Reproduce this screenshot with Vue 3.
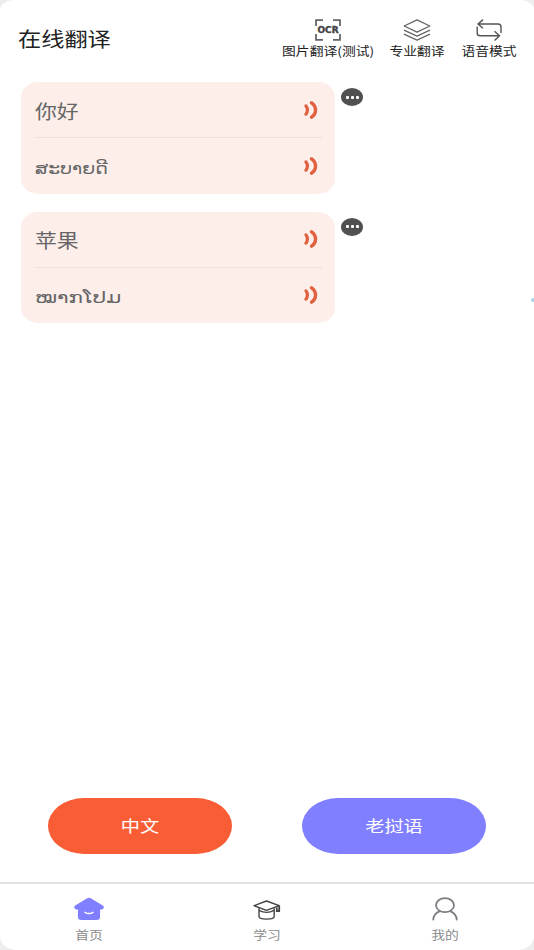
<template>
  <div class="app">
    <header class="header">
      <h1 class="title"><span class="wide">在线翻译</span></h1>
      <nav class="tools">
        <button class="tool ocr">
          <svg width="26" height="22" viewBox="0 0 26 22" fill="none" stroke="#666" stroke-width="1.8">
            <path d="M1 7V1.2h7M18 1.2h7V7M25 15v5.8h-7M8 20.8H1V15" />
            <text x="2.5" y="13.6" class="ocr-text" textLength="21" lengthAdjust="spacingAndGlyphs">OCR</text>
          </svg>
          <span class="wide">图片翻译(测试)</span>
        </button>
        <button class="tool pro">
          <svg width="28" height="22" viewBox="0 0 28 22" fill="none" stroke="#666" stroke-width="1.3" stroke-linejoin="round">
            <path d="M14 .8 26.8 7 14 13.2 1.2 7z" />
            <path d="M1 11.2l13 6 13-6M1 15.2l13 6 13-6" />
          </svg>
          <span class="wide">专业翻译</span>
        </button>
        <button class="tool voice">
          <svg width="26" height="22" viewBox="0 0 26 22" fill="none" stroke="#555" stroke-width="1.4">
            <path d="M7 .6 2 5l5 4.2M2 5H22q3 0 3 3V14" />
            <path d="M18.5 12.2l5 4.6-5 4.6M23.5 16.8H4q-2.8 0-2.8-2.5V7.5" />
          </svg>
          <span class="wide">语音模式</span>
        </button>
      </nav>
    </header>

    <main class="messages">
      <div v-for="item in messages" :key="item.source" class="message">
        <div class="card">
          <div class="line source">
            <span class="wide">{{ item.source }}</span>
            <svg class="sound" width="14" height="18" viewBox="0 0 14 18" fill="none" stroke="#e0603f" stroke-linecap="round">
              <path d="M2 4.9Q4.8 9 2 13.2" stroke-width="3.2" />
              <path d="M7.6 1.8C12.8 5.4 12.8 12.6 7.6 16.2" stroke-width="3.4" />
            </svg>
          </div>
          <div class="line target">
            <span class="wide lao" :class="item.size">{{ item.target }}</span>
            <svg class="sound" width="14" height="18" viewBox="0 0 14 18" fill="none" stroke="#e0603f" stroke-linecap="round">
              <path d="M2 4.9Q4.8 9 2 13.2" stroke-width="3.2" />
              <path d="M7.6 1.8C12.8 5.4 12.8 12.6 7.6 16.2" stroke-width="3.4" />
            </svg>
          </div>
        </div>
        <button class="more"><i></i><i></i><i></i></button>
      </div>
    </main>

    <span class="edge-dot"></span>

    <div class="languages">
      <button class="lang chinese"><span class="wide">中文</span></button>
      <button class="lang laotian"><span class="wide">老挝语</span></button>
    </div>

    <footer class="tabbar">
      <div class="tab">
        <svg width="30" height="24" viewBox="0 0 30 24">
          <path d="M13.2 1.2q1.8-1 3.6 0L28.8 8.6q1.6 1.4.6 2.9-.6.9-2.2.9h-1.1v7.4q0 3.2-3.6 3.2h-15q-3.6 0-3.6-3.2v-7.4H2.8q-1.6 0-2.2-.9-1-1.5.6-2.9z" fill="#807fff" />
          <path d="M11 15.3q4 2.6 8 0" fill="none" stroke="#fff" stroke-width="1.5" stroke-linecap="round" />
        </svg>
        <span class="wide">首页</span>
      </div>
      <div class="tab">
        <svg width="28" height="24" viewBox="0 0 28 24" fill="none" stroke="#444" stroke-width="1.4" stroke-linejoin="round">
          <path d="M13.5 4 26.2 8.7 13.5 13.4 1 8.7z" />
          <path d="M6 11.2v8.3q0 2.6 7.6 2.6t7.6-2.6v-8.3" />
          <path d="M6 13.4q7.6 4 15.2 0" />
          <path d="M26.2 8.7v5.5h-2.4v-3.7" stroke-width="1.8" />
        </svg>
        <span class="wide">学习</span>
      </div>
      <div class="tab">
        <svg width="26" height="24" viewBox="0 0 26 24" fill="none" stroke="#7d7d83" stroke-width="1.8" stroke-linecap="round">
          <ellipse cx="13" cy="8.2" rx="9" ry="7" />
          <path d="M1.3 22.5Q1.6 17 7.4 14.4M18.6 14.4Q24.4 17 24.7 22.5" />
        </svg>
        <span class="wide">我的</span>
      </div>
    </footer>
  </div>
</template>

<script setup>
const messages = [
  { source: '你好', target: 'ສະບາຍດີ', size: 'short' },
  { source: '苹果', target: 'ໝາກໂປມ', size: 'long' }
];
</script>

<style>
body {
  margin: 0;
  background: #ededed;
}
</style>

<style scoped>
.app {
  position: relative;
  display: flex;
  flex-direction: column;
  width: 534px;
  height: 950px;
  overflow: hidden;
  background: #fff;
  border-radius: 14px 14px 17px 17px / 10px 10px 14px 14px;
  font-family: "Noto Sans CJK SC", "DejaVu Sans", sans-serif;
}

button {
  padding: 0;
  border: 0;
  background: none;
  font-family: inherit;
}

svg {
  display: block;
}

.wide {
  display: inline-block;
  white-space: nowrap;
  transform: scaleX(1.15);
}

.header {
  display: flex;
  justify-content: space-between;
  height: 82px;
  padding: 0 17px 0 18px;
  box-sizing: border-box;
}

.title {
  margin: 25px 0 0;
  font-size: 20px;
  font-weight: 400;
  line-height: 28px;
  color: #222;
}

.title .wide {
  transform: scaleX(1.16);
  transform-origin: left;
}

.tools {
  display: flex;
  gap: 16px;
  padding-top: 19px;
}

.tool {
  display: flex;
  flex-direction: column;
  align-items: center;
  width: 56px;
  height: 41px;
  font-size: 12px;
  line-height: 14px;
  color: #222;
}

.tool .wide {
  margin-top: 3px;
}

.tool.ocr {
  width: 91px;
}

.tool.ocr .wide {
  padding-left: 1px;
}

.ocr-text {
  font: 900 8.5px "DejaVu Sans", sans-serif;
  fill: #444;
  stroke: #444;
  stroke-width: 0.4;
}

.messages {
  display: flex;
  flex: 1;
  flex-direction: column;
  gap: 18px;
  padding-left: 21px;
}

.message {
  display: flex;
  align-items: flex-start;
  gap: 6px;
}

.card {
  width: 314px;
  height: 111.5px;
  padding: 0 13px 0 14px;
  box-sizing: border-box;
  background: #fdeeea;
  border-radius: 17px / 15px;
}

.line {
  display: flex;
  align-items: center;
  justify-content: space-between;
  height: 55px;
  padding-right: 4px;
  color: #666;
}

.line .wide {
  transform-origin: left;
}

.source {
  border-bottom: 1px solid #f1dfdb;
  font-size: 19px;
}

.source .wide {
  padding-top: 1px;
}

.target {
  font-size: 16px;
}

.lao {
  padding-top: 2px;
}

.line .lao.short {
  transform: scaleX(1.18);
}

.line .lao.long {
  transform: scaleX(1.34);
}

.more {
  display: flex;
  align-items: center;
  justify-content: center;
  gap: 2px;
  width: 22px;
  height: 18px;
  margin-top: 6px;
  background: #505050;
  border-radius: 50%;
}

.more i {
  width: 3px;
  height: 3px;
  background: #fff;
  border-radius: 1px;
}

.edge-dot {
  position: absolute;
  top: 298px;
  right: -3px;
  width: 6px;
  height: 4px;
  background: #a9d4f2;
  border-radius: 50%;
}

.languages {
  display: flex;
  justify-content: space-between;
  padding: 0 48px 28px;
}

.lang {
  width: 184px;
  height: 56px;
  padding-bottom: 2px;
  border-radius: 36px / 28px;
  font-size: 16px;
  color: #fff;
}

.lang .wide {
  transform: scaleX(1.2);
}

.chinese {
  background: #f95d36;
}

.laotian {
  background: #807fff;
}

.tabbar {
  display: flex;
  height: 68px;
  box-sizing: border-box;
  border-top: 2px solid #e2e2e2;
}

.tab {
  display: flex;
  flex: 1;
  flex-direction: column;
  align-items: center;
  padding-top: 13px;
  font-size: 12px;
  line-height: 16px;
  color: #8c8c8c;
}

.tab .wide {
  margin-top: 6px;
}
</style>
